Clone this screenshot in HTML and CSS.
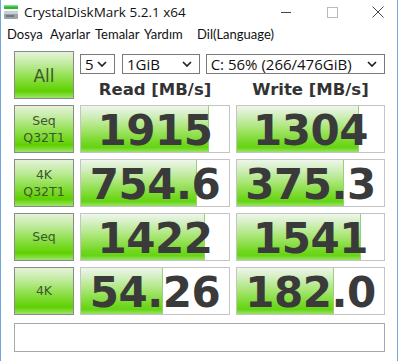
FILE: index.html
```html
<!DOCTYPE html>
<html lang="tr">
<head>
  <meta charset="UTF-8" />
  <title>CrystalDiskMark 5.2.1 x64</title>
  <link rel="stylesheet" href="styles.css">
</head>
<body>
  <div class="window">
    <div class="titlebar">
      <svg class="app-icon" width="16" height="16" viewBox="0 0 16 16">
        <rect x="1" y="1" width="14" height="4" fill="#2fb52f"/>
        <rect x="1" y="1" width="14" height="1.5" fill="#7fe07f"/>
        <rect x="1" y="7" width="14" height="8" rx="1" fill="#9aa3a8"/>
        <rect x="1" y="7" width="14" height="3" fill="#c9d0d4"/>
        <rect x="3" y="11" width="8" height="2" fill="#6e777c"/>
      </svg>
      <span class="title">CrystalDiskMark 5.2.1 x64</span>
      <div class="controls">
        <svg width="46" height="24" viewBox="0 0 46 24"><line x1="18" y1="12.5" x2="28" y2="12.5" stroke="#444" stroke-width="1"/></svg>
        <svg width="46" height="24" viewBox="0 0 46 24"><rect x="18.5" y="7.5" width="10" height="10" fill="none" stroke="#bbb" stroke-width="1"/></svg>
        <svg width="46" height="24" viewBox="0 0 46 24"><path d="M17.5 6.5 L28.5 17.5 M28.5 6.5 L17.5 17.5" stroke="#444" stroke-width="1"/></svg>
      </div>
    </div>

    <div class="menubar">
      <span class="menu-item m-dosya">Dosya</span>
      <span class="menu-item m-ayarlar">Ayarlar</span>
      <span class="menu-item m-temalar">Temalar</span>
      <span class="menu-item m-yardim">Yardım</span>
      <span class="menu-item">Dil(Language)</span>
    </div>

    <div class="main">
      <div class="grid">
        <div class="btn btn-all">All</div>
        <div class="top">
          <div class="selects">
            <div class="select sel-count">5<svg class="chev" width="10" height="6" viewBox="0 0 10 6"><path d="M1 1 L5 5 L9 1" fill="none" stroke="#222" stroke-width="1.7"/></svg></div>
            <div class="select sel-size">1GiB<svg class="chev" width="10" height="6" viewBox="0 0 10 6"><path d="M1 1 L5 5 L9 1" fill="none" stroke="#222" stroke-width="1.7"/></svg></div>
            <div class="select sel-drive">C: 56% (266/476GiB)<svg class="chev" width="10" height="6" viewBox="0 0 10 6"><path d="M1 1 L5 5 L9 1" fill="none" stroke="#222" stroke-width="1.7"/></svg></div>
          </div>
          <div class="heads">
            <div class="head">Read [MB/s]</div>
            <div class="head">Write [MB/s]</div>
          </div>
        </div>

        <div class="btn">Seq<br>Q32T1</div>
        <div class="val"><div class="fill" style="width: 86%"></div><span>1915</span></div>
        <div class="val"><div class="fill" style="width: 82%"></div><span>1304</span></div>

        <div class="btn">4K<br>Q32T1</div>
        <div class="val"><div class="fill" style="width: 78%"></div><span>754.6</span></div>
        <div class="val"><div class="fill" style="width: 72%"></div><span>375.3</span></div>

        <div class="btn">Seq</div>
        <div class="val"><div class="fill" style="width: 83%"></div><span>1422</span></div>
        <div class="val"><div class="fill" style="width: 84%"></div><span>1541</span></div>

        <div class="btn">4K</div>
        <div class="val"><div class="fill" style="width: 55%"></div><span>54.26</span></div>
        <div class="val"><div class="fill" style="width: 65%"></div><span>182.0</span></div>
      </div>

      <div class="comment"></div>
    </div>
  </div>
</body>
</html>
```

FILE: styles.css
```css
body {
  margin: 0;
  background: #ffffff;
  font-family: "Open Sans", "Noto Sans", sans-serif;
  overflow: hidden;
}
.window {
  width: 396px;
  height: 361px;
  border-left: 1px solid #6fa5dd;
  border-right: 1px solid #6fa5dd;
  background: #ffffff;
}
.titlebar {
  height: 24px;
  display: flex;
  align-items: center;
  padding-left: 2px;
}
.app-icon {
  margin-right: 5px;
}
.title {
  font-size: 13.5px;
  color: #111;
}
.controls {
  margin-left: auto;
  display: flex;
  margin-right: -4px;
}
.menubar {
  height: 20px;
  display: flex;
  align-items: center;
  font-family: Lato, "Open Sans", sans-serif;
  font-size: 13px;
  color: #111;
  padding-left: 6px;
}
.menu-item {
  flex: none;
  white-space: nowrap;
}
.m-dosya {
  flex-basis: 43px;
}
.m-ayarlar {
  flex-basis: 45px;
}
.m-temalar {
  flex-basis: 49px;
}
.m-yardim {
  flex-basis: 53px;
}
.main {
  padding: 7px 0 0 13px;
}
.grid {
  display: grid;
  grid-template-columns: 60px 150px 149px;
  grid-auto-rows: 48px;
  column-gap: 6px;
  row-gap: 6px;
}
.btn {
  box-sizing: border-box;
  border: 1px solid #8a8a8a;
  background: linear-gradient(to bottom, #e4f3d8 0%, #c2eba0 25%, #8ee04a 55%, #5fd000 85%, #9ae66a 100%);
  display: flex;
  align-items: center;
  justify-content: center;
  text-align: center;
  font-family: "DejaVu Sans", sans-serif;
  font-size: 12.5px;
  line-height: 1.4;
  color: #3f5530;
}
.btn-all {
  font-size: 17px;
  padding-top: 4px;
}
.top {
  grid-column: 2 / 4;
  display: flex;
  flex-direction: column;
}
.selects {
  display: flex;
  margin-top: 3px;
  gap: 6px;
}
.select {
  box-sizing: border-box;
  height: 20px;
  border: 1px solid #7a7a7a;
  background: #fff;
  display: flex;
  align-items: center;
  padding: 0 7px 0 4px;
  font-size: 15px;
  color: #111;
}
.chev {
  margin-left: auto;
}
.sel-count {
  width: 35px;
}
.sel-size {
  width: 78px;
  margin-left: 1px;
}
.sel-drive {
  width: 180px;
}
.heads {
  display: grid;
  grid-template-columns: 150px 149px;
  column-gap: 6px;
  margin-top: 6px;
}
.head {
  text-align: center;
  font-family: "DejaVu Sans", sans-serif;
  font-weight: bold;
  font-size: 16.5px;
  color: #333;
}
.val {
  position: relative;
  box-sizing: border-box;
  border: 1px solid #c4c4c4;
  background: #fff;
  display: flex;
  align-items: center;
  justify-content: center;
  overflow: hidden;
}
.fill {
  position: absolute;
  top: 0;
  left: 0;
  bottom: 0;
  border-right: 1px solid #9ccf7c;
  background: linear-gradient(to bottom, #eef6ea 0%, #d3efc0 20%, #a6e570 50%, #72d822 80%, #66d414 90%, #98e466 100%);
}
.val span {
  position: relative;
  top: 1px;
  font-family: "DejaVu Sans", sans-serif;
  font-weight: bold;
  font-size: 42px;
  color: #3a3a3a;
  letter-spacing: -0.5px;
}
.comment {
  box-sizing: border-box;
  width: 371px;
  height: 29px;
  margin-top: 8px;
  border: 1px solid #a8a8a8;
  background: #fff;
}
```
